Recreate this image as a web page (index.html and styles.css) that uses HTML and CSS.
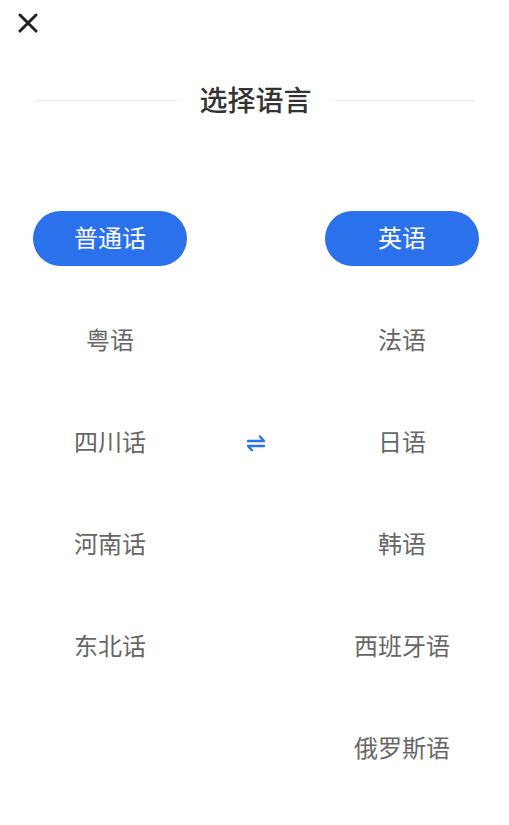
FILE: index.html
```html
<!doctype html>
<html lang="zh-CN">
<head>
    <meta charset="UTF-8">
    <title>选择语言</title>
    <link rel="stylesheet" href="styles.css">
</head>
<body>
<div class="page">
    <div class="top">
        <svg class="close" width="20" height="20" viewBox="0 0 20 20">
            <path d="M2 2 L18 18 M18 2 L2 18"/>
        </svg>
    </div>

    <div class="title">
        <span class="line"></span>
        <h1>选择语言</h1>
        <span class="line"></span>
    </div>

    <div class="langs">
        <div class="lang active">普通话</div>
        <div></div>
        <div class="lang active">英语</div>

        <div class="lang">粤语</div>
        <div></div>
        <div class="lang">法语</div>

        <div class="lang">四川话</div>
        <div class="swap">
            <svg width="18" height="16" viewBox="0 0 18 16">
                <path d="M1 6 H17 L13 1.5"/>
                <path d="M17 11 H1 L5 15.5"/>
            </svg>
        </div>
        <div class="lang">日语</div>

        <div class="lang">河南话</div>
        <div></div>
        <div class="lang">韩语</div>

        <div class="lang">东北话</div>
        <div></div>
        <div class="lang">西班牙语</div>

        <div></div>
        <div></div>
        <div class="lang">俄罗斯语</div>
    </div>
</div>
</body>
</html>
```

FILE: styles.css
```css
body {
    margin: 0;
    background: #fff;
    font-family: "Noto Sans CJK SC", "Noto Sans", sans-serif;
}

.page {
    width: 509px;
}

.top {
    padding: 13px 0 0 18px;
    height: 20px;
}

.close path {
    fill: none;
    stroke: #222;
    stroke-width: 3;
    stroke-linecap: round;
}

.title {
    display: flex;
    align-items: center;
    gap: 23px;
    margin: 48px 34px 0 36px;
    height: 36px;
}

.title .line {
    flex: 1;
    height: 1px;
    margin-top: 2px;
    background: #ececec;
}

.title h1 {
    margin: 0;
    font-size: 28px;
    font-weight: 500;
    line-height: 36px;
    color: #333;
}

.langs {
    display: grid;
    grid-template-columns: 154px 1fr 154px;
    grid-auto-rows: 55px;
    row-gap: 47px;
    margin-top: 94px;
    padding: 0 30px 0 33px;
}

.lang {
    display: flex;
    align-items: center;
    justify-content: center;
    padding-bottom: 4px;
    font-size: 24px;
    color: #666;
}

.lang.active {
    background: #2a71eb;
    color: #fff;
    border-radius: 28px;
}

.swap {
    display: flex;
    align-items: center;
    justify-content: center;
}

.swap path {
    fill: none;
    stroke: #2a71eb;
    stroke-width: 2.4;
    stroke-linecap: round;
    stroke-linejoin: round;
}
```
